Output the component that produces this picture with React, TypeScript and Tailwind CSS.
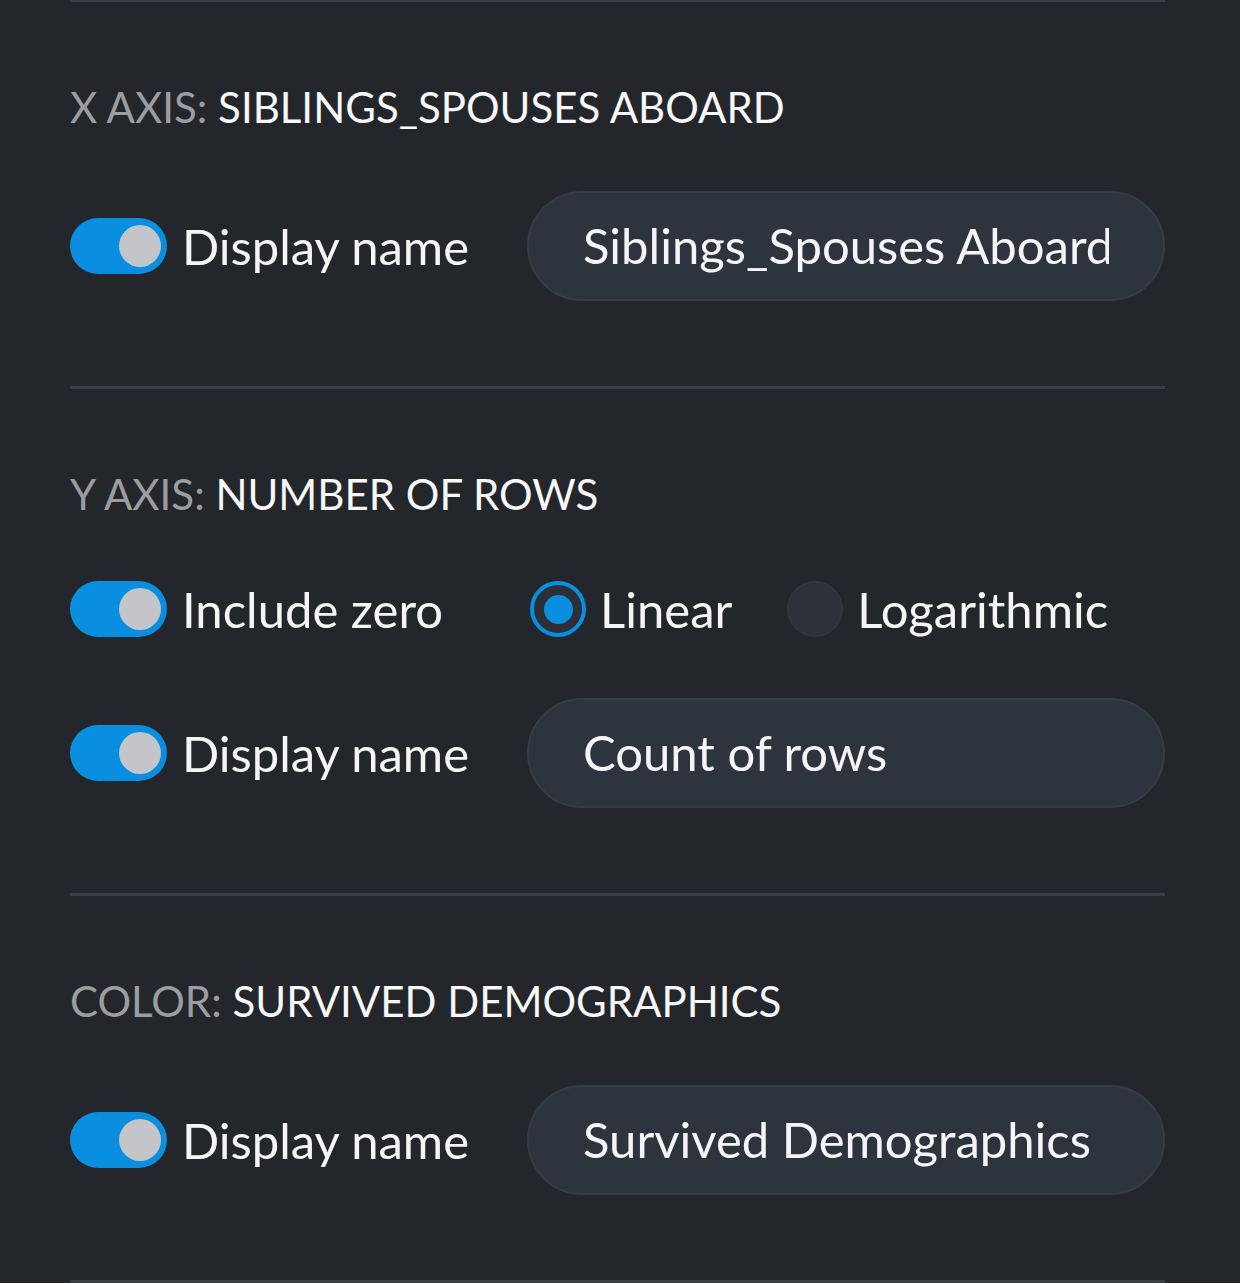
import { useState } from "react";

function Toggle({ on, onChange }: { on: boolean; onChange: (v: boolean) => void }) {
  return (
    <button
      type="button"
      onClick={() => onChange(!on)}
      className={`relative h-[56px] w-[97px] shrink-0 rounded-full transition ${
        on ? "bg-[#0a8ee0]" : "bg-[#3a3f47]"
      }`}
    >
      <span
        className={`absolute top-[7px] h-[42px] w-[42px] rounded-full bg-[#c4c5c8] transition-all ${
          on ? "left-[49px]" : "left-[7px]"
        }`}
      />
    </button>
  );
}

function Radio({ checked, label, onSelect }: { checked: boolean; label: string; onSelect: () => void }) {
  return (
    <button type="button" onClick={onSelect} className="flex items-center gap-[14px]">
      {checked ? (
        <span className="flex h-[56px] w-[56px] items-center justify-center rounded-full border-[4px] border-[#0a8ee0] bg-[#2b3038]">
          <span className="h-[29px] w-[29px] rounded-full bg-[#0a8ee0]" />
        </span>
      ) : (
        <span className="h-[56px] w-[56px] rounded-full border-2 border-[#30363f] bg-[#2d323a]" />
      )}
      <span className="text-[49px] leading-[58px] text-[#f5f5f5]">{label}</span>
    </button>
  );
}

function NameRow({ defaultName }: { defaultName: string }) {
  const [on, setOn] = useState(true);
  return (
    <div className="flex items-center">
      <div className="flex w-[457px] shrink-0 items-center gap-[15px]">
        <Toggle on={on} onChange={setOn} />
        <span className="text-[49px] leading-[58px] text-[#f5f5f5]">Display name</span>
      </div>
      <input
        defaultValue={defaultName}
        className="h-[110px] w-full min-w-0 flex-1 rounded-full border-2 border-[#363c45] bg-[#2e343d] px-[54px] pb-[3px] text-[49px] text-[#f5f5f5] outline-none"
      />
    </div>
  );
}

function Heading({ kind, value }: { kind: string; value: string }) {
  return (
    <h2 className="text-[42px] leading-[48px]">
      <span className="text-[#9b9da1]">{kind}: </span>
      <span className="text-[#f7f7f7]">{value}</span>
    </h2>
  );
}

export default function App() {
  const [includeZero, setIncludeZero] = useState(true);
  const [scale, setScale] = useState<"linear" | "log">("linear");

  return (
    <main
      className="min-h-screen bg-[#23262b] pl-[70px] pr-[75px]"
      style={{ fontFamily: "Lato, 'Noto Sans', sans-serif" }}
    >
      <section className="-mt-px border-t-[3px] border-[#393d45] pt-[81px] pb-[85px]">
        <Heading kind="X AXIS" value="SIBLINGS_SPOUSES ABOARD" />
        <div className="mt-[60px]">
          <NameRow defaultName="Siblings_Spouses Aboard" />
        </div>
      </section>

      <section className="border-t-[3px] border-[#393d45] pt-[81px] pb-[85px]">
        <Heading kind="Y AXIS" value="NUMBER OF ROWS" />
        <div className="mt-[60px] flex h-[62px] items-center">
          <div className="flex w-[460px] shrink-0 items-center gap-[15px]">
            <Toggle on={includeZero} onChange={setIncludeZero} />
            <span className="text-[49px] leading-[58px] text-[#f5f5f5]">Include zero</span>
          </div>
          <div className="flex items-center gap-[55px]">
            <Radio checked={scale === "linear"} label="Linear" onSelect={() => setScale("linear")} />
            <Radio checked={scale === "log"} label="Logarithmic" onSelect={() => setScale("log")} />
          </div>
        </div>
        <div className="mt-[58px]">
          <NameRow defaultName="Count of rows" />
        </div>
      </section>

      <section className="border-t-[3px] border-[#393d45] pt-[81px] pb-[85px]">
        <Heading kind="COLOR" value="SURVIVED DEMOGRAPHICS" />
        <div className="mt-[60px]">
          <NameRow defaultName="Survived Demographics" />
        </div>
      </section>

      <div className="h-[3px] bg-[#393d45]" />
    </main>
  );
}
